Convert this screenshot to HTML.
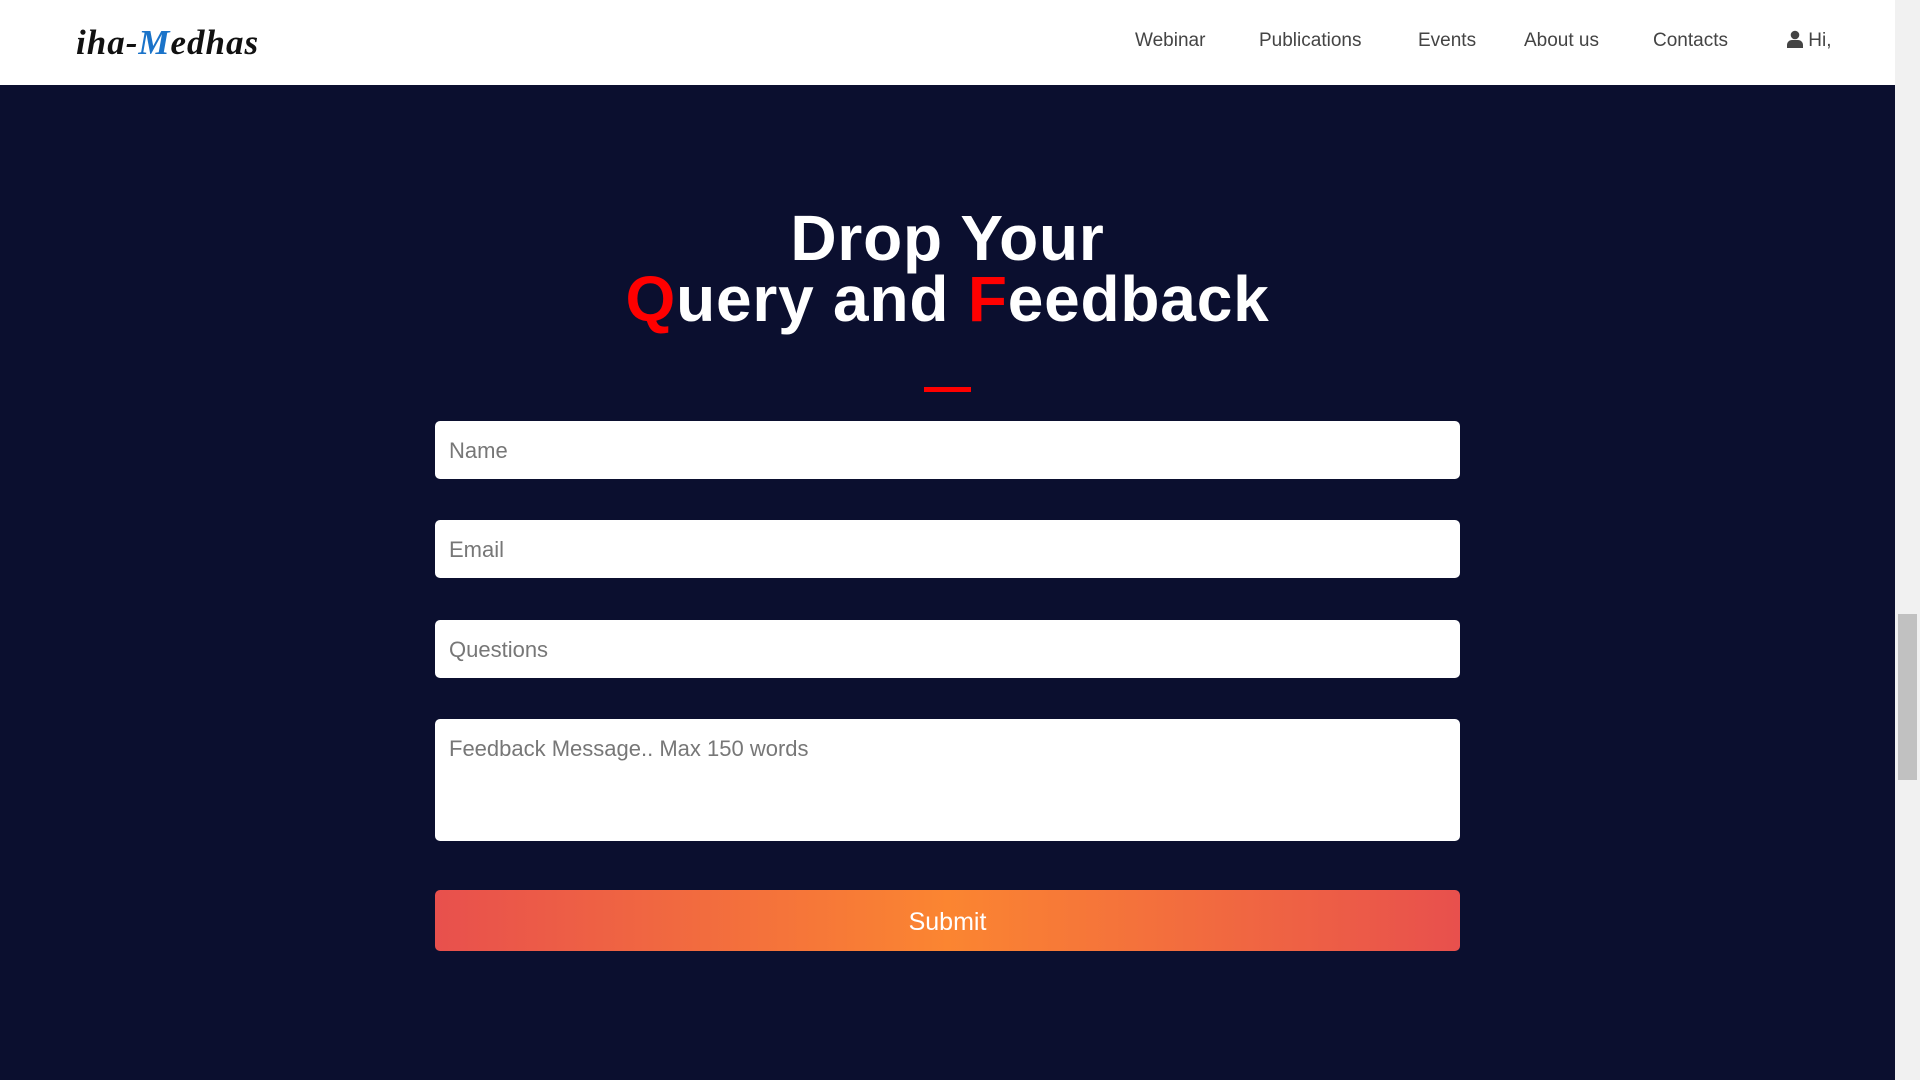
<!DOCTYPE html>
<html><head><meta charset="utf-8"><style>
*{margin:0;padding:0;box-sizing:border-box}
html,body{width:1920px;height:1080px;overflow:hidden;background:#0b0f2f;font-family:"Liberation Sans",sans-serif}
.hdr{position:absolute;left:0;top:0;width:1895px;height:85px;background:#fff}
.logo{position:absolute;left:76px;top:23px;font-family:"Liberation Serif",serif;font-style:italic;font-weight:bold;font-size:35px;color:#111;letter-spacing:1px}
.logo b{color:#1a73c9}
.nav a{position:absolute;top:30px;font-size:19px;color:#444;text-decoration:none}
.sb{position:absolute;left:1895px;top:0;width:25px;height:1080px;background:#f1f1f1}
.thumb{position:absolute;left:1898px;top:614px;width:19px;height:166px;background:#c1c1c1}
h1{position:absolute;left:0;width:1895px;top:208px;text-align:center;color:#fff;font-size:64px;line-height:61px;font-weight:bold;letter-spacing:0.8px}
h1 span{color:#f00}
.line{position:absolute;left:924px;top:387px;width:47px;height:5px;background:#f00}
.in{position:absolute;left:435px;width:1025px;height:58px;background:#fff;border-radius:5px;font-size:22px;color:#777;padding:17px 14px}
.btn{position:absolute;left:435px;top:890px;width:1025px;height:61px;border-radius:5px;background:linear-gradient(90deg,#e8504d,#fb8531 50%,#e8504d);color:#fff;font-size:25px;text-align:center;line-height:64px}
</style></head><body>
<div class="hdr">
<div class="logo">iha-<b>M</b>edhas</div>
<div class="nav">
<a style="left:1135px">Webinar</a>
<a style="left:1259px">Publications</a>
<a style="left:1418px">Events</a>
<a style="left:1524px">About us</a>
<a style="left:1653px">Contacts</a>
<a style="left:1787px"><svg width="16" height="18" viewBox="0 0 16 18" style="vertical-align:-2px"><circle cx="8" cy="5" r="4.3" fill="#444"/><path d="M0 18v-3c0-3 2.5-5 5-5h6c2.5 0 5 2 5 5v3z" fill="#444"/></svg> Hi,</a>
</div></div>
<div class="sb"></div><div class="thumb"></div>
<h1>Drop Your<br><span>Q</span>uery and <span>F</span>eedback</h1>
<div class="line"></div>
<div class="in" style="top:421px">Name</div>
<div class="in" style="top:520px">Email</div>
<div class="in" style="top:620px">Questions</div>
<div class="in" style="top:719px;height:122px">Feedback Message.. Max 150 words</div>
<div class="btn">Submit</div>
</body></html>
